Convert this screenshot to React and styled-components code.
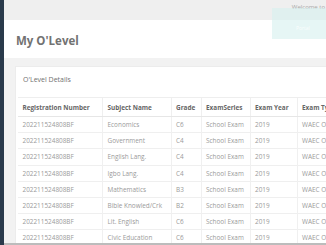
import React from "react";
import styled, { createGlobalStyle } from "styled-components";

const Global = createGlobalStyle`
  html, body { margin: 0; padding: 0; }
  body { font-family: "Open Sans", "Noto Sans", sans-serif; background: #f2f2f2; overflow: hidden; }
  #root { height: 245px; }
`;

const Shell = styled.div`
  display: flex;
  height: 245px;
  width: 326px;
  overflow: hidden;
`;

const Sidebar = styled.aside`
  width: 4px;
  flex: none;
  background: #2a3a4b;
`;

const Main = styled.div`
  flex: 1;
  min-width: 0;
  display: flex;
  flex-direction: column;
  position: relative;
  background: #f2f2f2;
`;

const TopBar = styled.div`
  height: 20px;
  flex: none;
  background: #efefef;
  display: flex;
  justify-content: flex-end;
  align-items: flex-start;
  white-space: nowrap;
  overflow: hidden;
`;

const Welcome = styled.span`
  font-size: 6px;
  line-height: 8px;
  margin-top: 3px;
  margin-right: 1px;
  color: #a8a8a8;
`;

const Toast = styled.div`
  position: absolute;
  top: 8px;
  left: 268px;
  width: 54px;
  height: 31px;
  background: rgba(214, 240, 238, 0.6);
  display: flex;
  align-items: flex-end;
  padding: 0 0 8px 24px;
  box-sizing: border-box;
  font-size: 5px;
  color: rgba(255, 255, 255, 0.85);
  white-space: nowrap;
`;

const PageHeader = styled.div`
  height: 38px;
  flex: none;
  background: #ffffff;
  display: flex;
  align-items: center;
  padding-left: 12px;
`;

const Title = styled.h1`
  margin: 0;
  font-size: 11.5px;
  font-weight: 700;
  color: #727272;
  padding-top: 2px;
`;

const Content = styled.div`
  flex: 1;
  min-height: 0;
  overflow: hidden;
  padding: 8px 0 0 11px;
`;

const Card = styled.section`
  background: #ffffff;
  width: 340px;
  border: 1px solid #ececec;
  border-right: none;
  box-sizing: border-box;
`;

const CardHeader = styled.div`
  height: 24px;
  display: flex;
  align-items: center;
  padding-left: 7px;
  font-size: 7px;
  color: #707070;
`;

const CardBody = styled.div`
  padding: 6px 0 0 2px;
`;

const Table = styled.table`
  border-collapse: collapse;
  table-layout: fixed;
  width: 337px;
  font-size: 6.4px;
  white-space: nowrap;
`;

const Th = styled.th`
  text-align: left;
  font-weight: 700;
  color: #666666;
  height: 18px;
  padding: 0 0 0 4.5px;
  border-top: 1px solid #eeeeee;
  border-bottom: 1px solid #e6e6e6;
  border-left: ${(p) => (p.$first ? "none" : "1px solid #efefef")};
  overflow: hidden;
`;

const Td = styled.td`
  color: #9a9a9a;
  height: 15.2px;
  padding: 0 0 0 4.5px;
  border-top: 1px solid #efefef;
  border-left: ${(p) => (p.$first ? "none" : "1px solid #f0f0f0")};
  overflow: hidden;
`;

const BottomLine = styled.div`
  position: absolute;
  left: 0;
  right: 0;
  bottom: 0;
  height: 2px;
  background: #bcbcbc;
`;

const cols = [84.5, 68.5, 30, 49, 47, 58];
const heads = ["Registration Number", "Subject Name", "Grade", "ExamSeries", "Exam Year", "Exam Type"];
const rows = [
  ["Economics", "C6"],
  ["Government", "C4"],
  ["English Lang.", "C4"],
  ["Igbo Lang.", "C4"],
  ["Mathematics", "B3"],
  ["Bible Knowled/Crk", "B2"],
  ["Lit. English", "C6"],
  ["Civic Education", "C6"],
];

export default function App() {
  return (
    <>
      <Global />
      <Shell>
        <Sidebar />
        <Main>
          <TopBar>
            <Welcome>Welcome to</Welcome>
          </TopBar>
          <Toast>Portal</Toast>
          <PageHeader>
            <Title>My O'Level</Title>
          </PageHeader>
          <Content>
            <Card>
              <CardHeader>O'Level Details</CardHeader>
              <CardBody>
                <Table>
                  <colgroup>
                    {cols.map((w, i) => (
                      <col key={i} style={{ width: w }} />
                    ))}
                  </colgroup>
                  <thead>
                    <tr>
                      {heads.map((h, i) => (
                        <Th key={h} $first={i === 0}>{h}</Th>
                      ))}
                    </tr>
                  </thead>
                  <tbody>
                    {rows.map(([subj, grade]) => (
                      <tr key={subj}>
                        <Td $first>202211524808BF</Td>
                        <Td>{subj}</Td>
                        <Td>{grade}</Td>
                        <Td>School Exam</Td>
                        <Td>2019</Td>
                        <Td>WAEC Original</Td>
                      </tr>
                    ))}
                  </tbody>
                </Table>
              </CardBody>
            </Card>
          </Content>
          <BottomLine />
        </Main>
      </Shell>
    </>
  );
}
